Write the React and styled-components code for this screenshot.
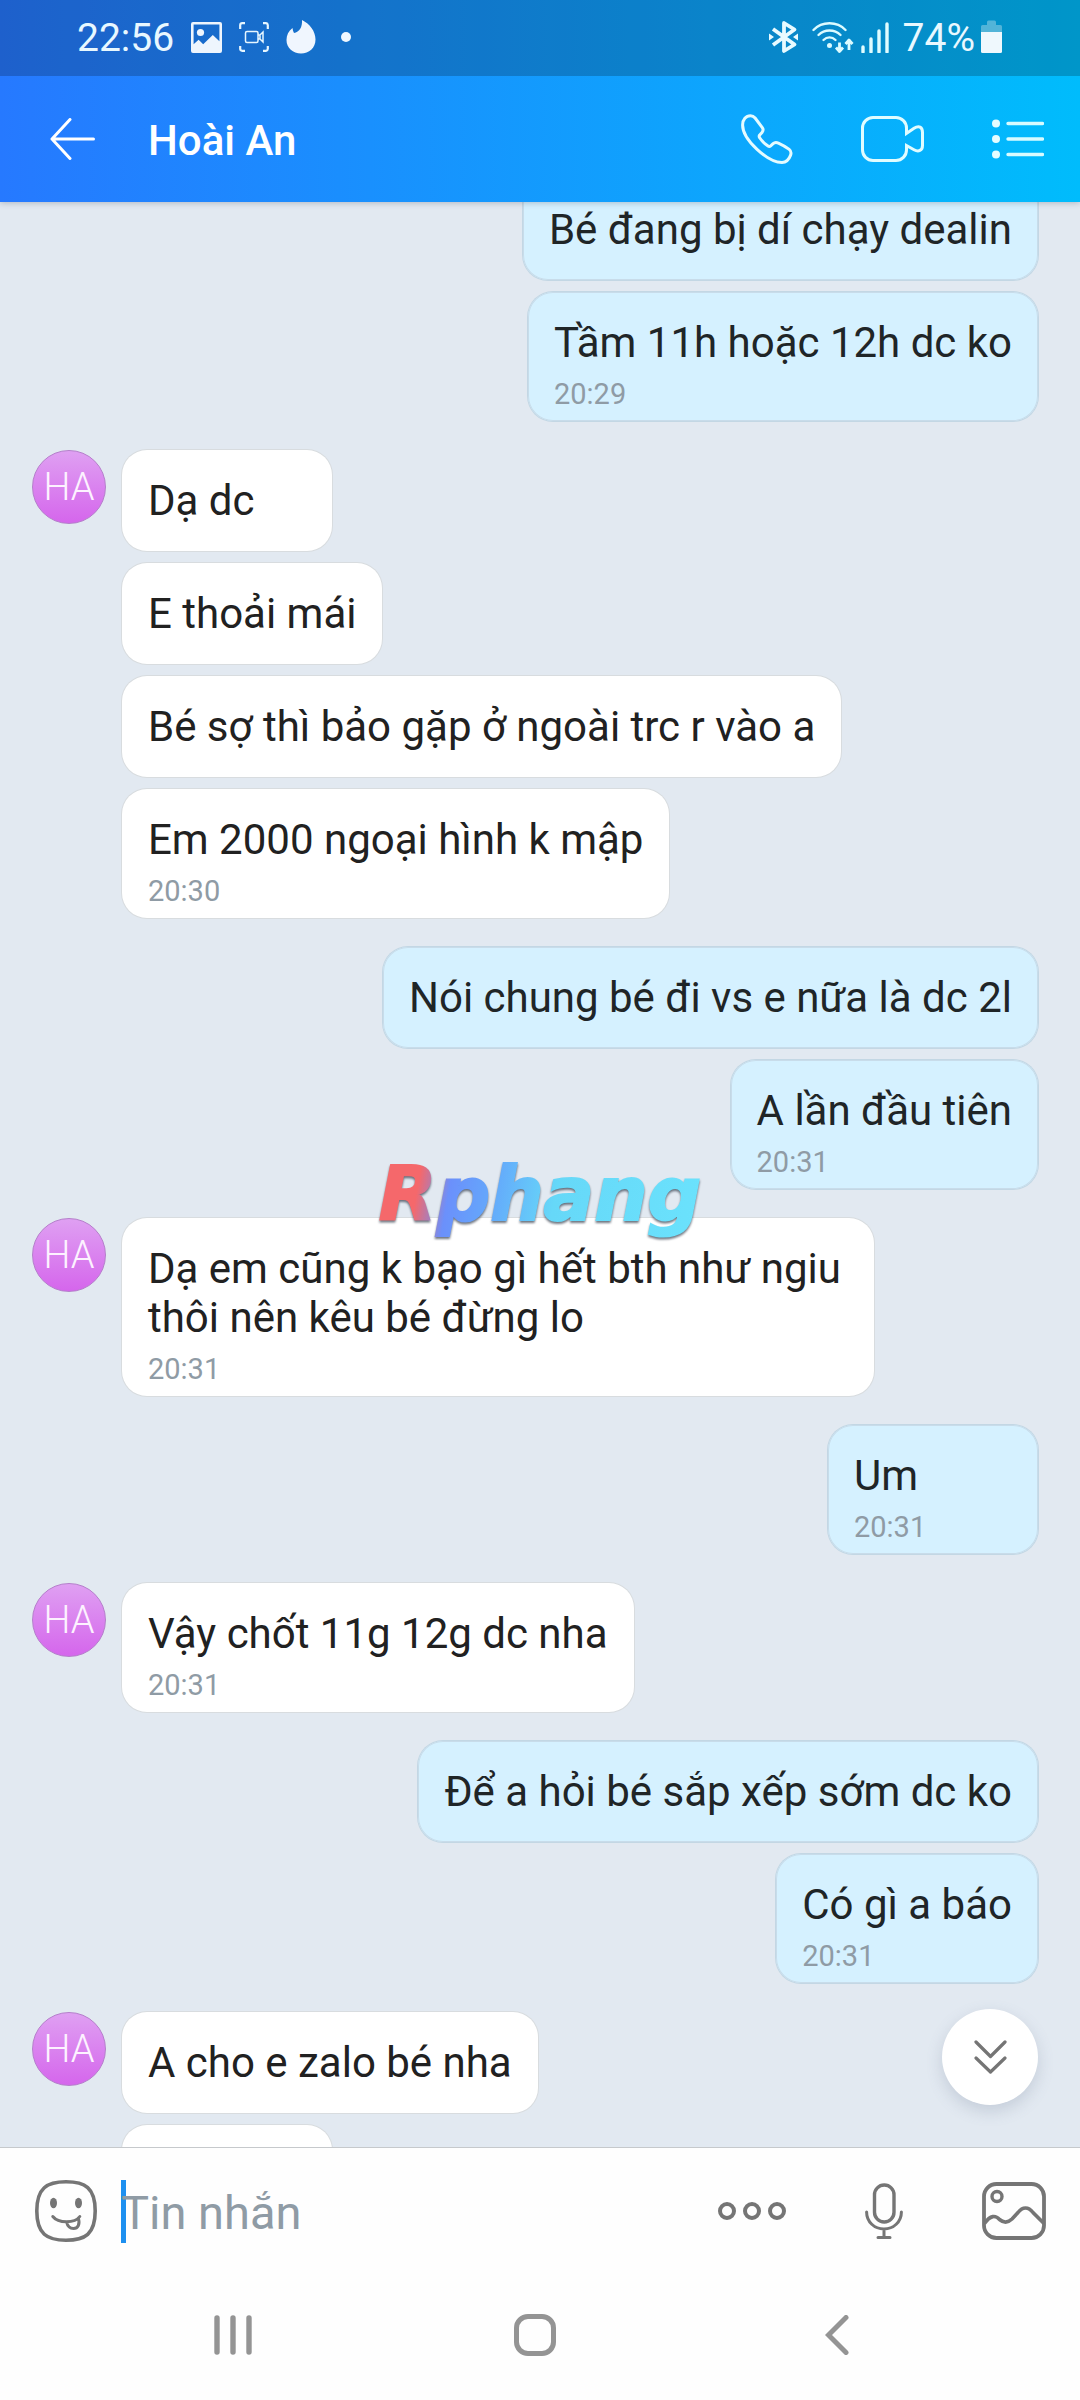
import React, { useLayoutEffect, useRef, useState } from "react";
import styled, { createGlobalStyle, css } from "styled-components";

//conversation data, grouped by sender
const groups = [
  {
    mine: true,
    messages: [
      { text: "Bé đang bị dí chạy dealin" },
      { text: "Tầm 11h hoặc 12h dc ko", time: "20:29" },
    ],
  },
  {
    messages: [
      { text: "Dạ dc" },
      { text: "E thoải mái" },
      { text: "Bé sợ thì bảo gặp ở ngoài trc r vào a" },
      { text: "Em 2000 ngoại hình k mập", time: "20:30" },
    ],
  },
  {
    mine: true,
    messages: [
      { text: "Nói chung bé đi vs e nữa là dc 2l" },
      { text: "A lần đầu tiên", time: "20:31" },
    ],
  },
  {
    messages: [
      {
        text: "Dạ em cũng k bạo gì hết bth như ngiu thôi nên kêu bé đừng lo",
        time: "20:31",
      },
    ],
  },
  { mine: true, messages: [{ text: "Um", time: "20:31" }] },
  { messages: [{ text: "Vậy chốt 11g 12g dc nha", time: "20:31" }] },
  {
    mine: true,
    messages: [
      { text: "Để a hỏi bé sắp xếp sớm dc ko" },
      { text: "Có gì a báo", time: "20:31" },
    ],
  },
  { messages: [{ text: "A cho e zalo bé nha" }, { text: "" }] },
];

const StatusIcons = () => (
  <>
    <svg width="31" height="31" viewBox="0 0 31 31">
      <path
        fill="#eef5fd"
        fillRule="evenodd"
        d="M2 0h27a2 2 0 0 1 2 2v27a2 2 0 0 1-2 2H2a2 2 0 0 1-2-2V2a2 2 0 0 1 2-2zm.6 2.6v19.6l5-4.4 4.6 4.4 9.600-9.200 6.600 6.200V2.600z"
      />
      <circle cx="9.500" cy="10.500" r="3.600" fill="#eef5fd" />
    </svg>
    <svg width="30" height="30" viewBox="0 0 30 30" fill="none" stroke="#e6f6ff">
      <path
        strokeWidth="2.200"
        d="M1.200 7V3a2 2 0 0 1 2-1.800H6M24 1.200h3a2 2 0 0 1 1.800 1.800v4M28.800 24v3a2 2 0 0 1-1.800 1.800h-3M6 28.800H3.200A2 2 0 0 1 1.200 27v-3"
      />
      <path
        strokeWidth="1.500"
        d="M8 9.500h9.500a1.500 1.500 0 0 1 1.500 1.500v8a1.500 1.500 0 0 1-1.500 1.500H8A1.500 1.500 0 0 1 6.500 19v-8A1.500 1.500 0 0 1 8 9.500zM19 13l2 0 3-3v10l-3-3h-2M21 13v4"
      />
    </svg>
    <svg width="30" height="34" viewBox="0 0 30 34">
      <path
        fill="#f0f6fe"
        d="M16 0c8 4 13.500 11.500 13.500 19.500C29.500 28 23 33.500 15 33.500S.5 28 .5 20c0-5 2-9 6-12 .2 2 .7 3.700 1.500 5C13.500 12 16.500 7 16 0z"
      />
    </svg>
  </>
);

const SignalIcons = () => (
  <>
    <svg width="36" height="34" viewBox="0 0 36 34">
      <path
        d="M4 9l21.500 15.500-10.500 6.500V3l10.500 6.500L4 25"
        fill="none"
        stroke="#e8faff"
        strokeWidth="3.800"
        strokeLinejoin="round"
      />
      <path d="M0 13.500l5 3.500-5 3.500zM29 13.500v7L24 17z" fill="#e8faff" />
    </svg>
    <svg width="42" height="33" viewBox="0 0 42 33" fill="none" stroke="#dcfbff">
      <g strokeWidth="2.400" strokeLinecap="round">
        <path d="M1.500 9C10 0 25 0 33.500 9" />
        <path d="M6.500 14c6-6 16-6 22 0" />
        <path d="M11.500 19c3.500-3.500 8.500-3.500 12 0" />
      </g>
      <circle cx="17.500" cy="24.500" r="2.500" fill="#dcfbff" stroke="none" />
      <path
        strokeWidth="2.800"
        strokeLinejoin="round"
        d="M27.500 21.500V30M24 26.500l3.500 4 3.500-4M37 29V20M33.500 23l3.500-4 3.500 4"
      />
    </svg>
    <svg width="28" height="31" viewBox="0 0 28 31">
      <path
        d="M2 30v-5M10 30V17M18 30V9M26 30V2"
        stroke="#e0fcff"
        strokeWidth="3.400"
        strokeLinecap="round"
      />
    </svg>
  </>
);

const BatteryIcon = () => (
  <svg width="21" height="34" viewBox="0 0 21 34">
    <path
      fill="#52b4d8"
      d="M6 5V2a1.500 1.500 0 0 1 1.500-1.500h6A1.500 1.500 0 0 1 15 2v3h4.500A1.500 1.500 0 0 1 21 6.500V13H0V6.500A1.500 1.500 0 0 1 1.500 5z"
    />
    <path
      fill="#eff8fd"
      d="M0 12h21v19.500a1.500 1.500 0 0 1-1.500 1.500h-18A1.500 1.500 0 0 1 0 31.500z"
    />
  </svg>
);

const BackIcon = () => (
  <svg width="45" height="42" viewBox="0 0 45 42">
    <path
      d="M20 1.500L2 21l18 19.500M2 21h41.500"
      fill="none"
      stroke="#fff"
      strokeWidth="3"
      strokeLinecap="round"
      strokeLinejoin="round"
    />
  </svg>
);

const PhoneIcon = () => (
  <svg width="52" height="50" viewBox="0 0 52 50">
    <path
      d="M1.600 11C1.600 5.500 5 1.700 9.500 1.700c2 0 3.400.8 4.600 2.300l7.200 9.600c1.200 1.700 1 3.300-.3 4.800l-2.300 2.600c-.8 1-.7 1.800 0 2.800 2.200 3.400 4.900 6 8.300 8.300.9.600 1.800.6 2.700-.2l2.400-2.200c1.500-1.400 3.300-1.500 5.300-.6 4 1.800 7.600 3.800 10.800 6.300 2 1.600 2.300 3.400 1.300 6C48 45.500 45 48.400 41 48.400 27 48.400 1.600 26 1.600 11z"
      fill="none"
      stroke="#e4fbff"
      strokeWidth="3"
      strokeLinejoin="round"
    />
  </svg>
);

const VideoIcon = () => (
  <svg width="63" height="46" viewBox="0 0 63 46">
    <path
      d="M45.500 17.500V12A10.500 10.500 0 0 0 35 1.500H12A10.500 10.500 0 0 0 1.500 12v22A10.500 10.500 0 0 0 12 44.500h23A10.500 10.500 0 0 0 45.500 34v-4.500l7.500 4.200c4.500 2.600 8.500.8 8.500-4.200v-13c0-5.500-3.500-7.500-8.500-4.200z"
      fill="none"
      stroke="#e0fcff"
      strokeWidth="3"
    />
  </svg>
);

const ListIcon = () => (
  <svg width="52" height="40" viewBox="0 0 52 40">
    <path
      d="M16 4.500h34.500M16 20h34.500M16 35.500h34.500"
      stroke="#d8fbff"
      strokeWidth="3.400"
      strokeLinecap="round"
    />
    <circle cx="4" cy="4.500" r="4" fill="#e6fdff" />
    <circle cx="4" cy="20" r="4" fill="#e6fdff" />
    <circle cx="4" cy="35.500" r="4" fill="#e6fdff" />
  </svg>
);

const StickerIcon = () => (
  <svg width="62" height="62" viewBox="0 0 62 62" fill="none" stroke="#757575">
    <path
      d="M31 1.800c19 0 29.200 6 29.200 29.200S50 60.200 31 60.200 1.800 54 1.800 31 12 1.800 31 1.800z"
      strokeWidth="3.600"
    />
    <ellipse cx="18.500" cy="23" rx="3.500" ry="5.200" fill="#757575" stroke="none" />
    <ellipse cx="43.500" cy="23" rx="3.500" ry="5.200" fill="#757575" stroke="none" />
    <path
      d="M17.800 36.500c5.500 7 22 7 27 0M31.500 42c1 4 3.500 6.500 7 6.500 4.500 0 6.500-4 5-10"
      strokeWidth="3"
      strokeLinecap="round"
    />
  </svg>
);

const MoreIcon = () => (
  <svg width="68" height="18" viewBox="0 0 68 18" fill="none" stroke="#757575">
    <circle cx="9" cy="9" r="7" strokeWidth="4" />
    <circle cx="34" cy="9" r="7" strokeWidth="4" />
    <circle cx="59" cy="9" r="7" strokeWidth="4" />
  </svg>
);

const MicIcon = () => (
  <svg width="38" height="57" viewBox="0 0 38 57" fill="none" stroke="#757575">
    <rect x="9.500" y="2" width="19.500" height="37" rx="9.700" strokeWidth="3.400" />
    <path
      d="M1.600 29c0 10 8 17 17.400 17s17.400-7 17.400-17M19 46v8M13 54.500h12"
      strokeWidth="3"
      strokeLinecap="round"
    />
  </svg>
);

const GalleryIcon = () => (
  <svg width="64" height="58" viewBox="0 0 64 58" fill="none" stroke="#757575">
    <rect x="2" y="2" width="60" height="54" rx="12.500" strokeWidth="3.800" />
    <circle cx="15" cy="14.500" r="5" strokeWidth="3.400" />
    <path
      d="M2.500 41.500c6-8.500 11-8.500 15-4 4 3.300 8.500 3.300 12.500-.5l6-6.500c4.500-6 10.500-6 15 0l11 11"
      strokeWidth="3.600"
    />
  </svg>
);

const DoubleDownIcon = () => (
  <svg width="33" height="34" viewBox="0 0 33 34">
    <path
      d="M2 2l14.500 14.500L31 2M2 18l14.500 14L31 18"
      fill="none"
      stroke="#757575"
      strokeWidth="3.200"
      strokeLinecap="round"
      strokeLinejoin="round"
    />
  </svg>
);

const App = () => {
  const chatRef = useRef(null);
  const [draft, setDraft] = useState("");

  //keep the list a little scrolled under the header
  useLayoutEffect(() => {
    chatRef.current.scrollTop = 23;
  }, []);

  const scrollDown = () => {
    chatRef.current.scrollTop = chatRef.current.scrollHeight;
  };

  return (
    <>
      <GlobalStyle />
      <Screen>
        <TopBar>
          <StatusBar>
            <StatusText>22:56</StatusText>
            <StatusLeft>
              <StatusIcons />
              <StatusDot />
            </StatusLeft>
            <StatusRight>
              <SignalIcons />
            </StatusRight>
            <StatusText>74%</StatusText>
            <BatteryIcon />
          </StatusBar>
          <Header>
            <IconButton aria-label="Back">
              <BackIcon />
            </IconButton>
            <Title>Hoài An</Title>
            <HeaderActions>
              <IconButton aria-label="Call">
                <PhoneIcon />
              </IconButton>
              <IconButton aria-label="Video call">
                <VideoIcon />
              </IconButton>
              <IconButton aria-label="Options">
                <ListIcon />
              </IconButton>
            </HeaderActions>
          </Header>
        </TopBar>

        <ChatArea>
          <Chat ref={chatRef}>
            {groups.map((group, index) => (
              <Group key={index} $mine={group.mine}>
                {!group.mine && <Avatar>HA</Avatar>}
                <Bubbles $mine={group.mine}>
                  {group.messages.map((message, i) => (
                    <Bubble key={i} $mine={group.mine} $timed={message.time}>
                      <Message>{message.text}</Message>
                      {message.time && <Time>{message.time}</Time>}
                    </Bubble>
                  ))}
                </Bubbles>
              </Group>
            ))}
          </Chat>
          <ScrollButton aria-label="Scroll to latest" onClick={scrollDown}>
            <DoubleDownIcon />
          </ScrollButton>
        </ChatArea>

        <Composer>
          <IconButton aria-label="Stickers">
            <StickerIcon />
          </IconButton>
          <Field>
            <Input
              type="text"
              aria-label="Tin nhắn"
              placeholder="Tin nhắn"
              value={draft}
              onChange={(e) => setDraft(e.target.value)}
            />
          </Field>
          <ComposerActions>
            <IconButton aria-label="More">
              <MoreIcon />
            </IconButton>
            <IconButton aria-label="Voice">
              <MicIcon />
            </IconButton>
            <IconButton aria-label="Gallery">
              <GalleryIcon />
            </IconButton>
          </ComposerActions>
        </Composer>

        <NavBar>
          <IconButton aria-label="Recent apps">
            <svg width="38" height="40" viewBox="0 0 38 40">
              <path
                d="M3 3v34M19 3v34M35 3v34"
                stroke="#949494"
                strokeWidth="5.400"
                strokeLinecap="round"
              />
            </svg>
          </IconButton>
          <IconButton aria-label="Home">
            <svg width="42" height="42" viewBox="0 0 42 42">
              <rect
                x="2.500"
                y="2.500"
                width="37"
                height="37"
                rx="11.500"
                fill="none"
                stroke="#949494"
                strokeWidth="5"
              />
            </svg>
          </IconButton>
          <IconButton aria-label="Navigate back">
            <svg width="24" height="40" viewBox="0 0 24 40">
              <path
                d="M21 2.500L3.500 20 21 37.500"
                fill="none"
                stroke="#949494"
                strokeWidth="5"
                strokeLinecap="round"
              />
            </svg>
          </IconButton>
        </NavBar>

        <Watermark>Rphang</Watermark>
      </Screen>
    </>
  );
};

export default App;

//style Component
const GlobalStyle = createGlobalStyle`
  * {
    box-sizing: border-box;
  }
  body {
    margin: 0;
    font-family: Roboto, "Noto Sans", sans-serif;
  }
  svg {
    display: block;
    flex-shrink: 0;
  }
`;

const Screen = styled.div`
  position: relative;
  display: flex;
  flex-direction: column;
  height: 100vh;
  background: #fefefe;
`;

const TopBar = styled.header`
  position: relative;
  z-index: 1;
  background: linear-gradient(90deg, #2679ff, #00bcfc);
  box-shadow: 0 1px 6px rgba(60, 70, 90, 0.3);
`;

const StatusBar = styled.div`
  display: flex;
  align-items: center;
  height: 76px;
  padding: 0 78px 2px 77px;
  background: rgba(0, 0, 0, 0.2);
`;

const StatusText = styled.span`
  padding-top: 2px;
  font-size: 39px;
  line-height: 48px;
  color: #e8f8ff;
`;

const StatusLeft = styled.div`
  display: flex;
  align-items: center;
  flex: 1;
  gap: 17px;
  padding-left: 17px;
`;

const StatusDot = styled.span`
  width: 10px;
  height: 10px;
  margin-left: 8px;
  border-radius: 50%;
  background: #f0f8ff;
`;

const StatusRight = styled.div`
  display: flex;
  align-items: center;
  gap: 7px;
  padding-right: 14px;

  & + span {
    margin-right: 6px;
  }
`;

const Header = styled.div`
  display: flex;
  align-items: center;
  gap: 53px;
  height: 126px;
  padding: 0 36px 0 50px;
`;

const Title = styled.h1`
  flex: 1;
  margin: 0;
  padding-top: 2px;
  font-size: 42px;
  line-height: 49px;
  font-weight: 500;
  color: #fff;
`;

const HeaderActions = styled.div`
  display: flex;
  align-items: center;
  gap: 68px;
`;

const IconButton = styled.button`
  display: flex;
  align-items: center;
  justify-content: center;
  padding: 0;
  border: none;
  background: transparent;
`;

const ChatArea = styled.main`
  position: relative;
  flex: 1;
  min-height: 0;
  background: #e2e9f1;
`;

const Chat = styled.div`
  display: flex;
  flex-direction: column;
  gap: 29px;
  height: 100%;
  padding: 0 42px 0 32px;
  overflow-y: auto;
  scrollbar-width: none;
`;

const Group = styled.section`
  display: flex;
  flex-shrink: 0;
  align-items: flex-start;
  gap: 16px;
  justify-content: ${({ $mine }) => ($mine ? "flex-end" : "flex-start")};
`;

const Avatar = styled.div`
  display: flex;
  align-items: center;
  justify-content: center;
  width: 74px;
  height: 74px;
  border: 1px solid #b57fcb;
  border-radius: 50%;
  background: linear-gradient(#dfa0f2, #d566ec);
  color: #fdf2ff;
  font-size: 38px;
  font-weight: 300;
`;

const Bubbles = styled.div`
  display: flex;
  flex-direction: column;
  gap: 12px;
  max-width: 752px;
  align-items: ${({ $mine }) => ($mine ? "flex-end" : "flex-start")};
`;

const Bubble = styled.div`
  min-width: 210px;
  min-height: 101px;
  padding: 26px;
  border-radius: 25px;
  color: #212121;
  background: #fff;
  box-shadow: 0 0 0 1px #d8dcdf;

  ${({ $timed }) =>
    $timed &&
    css`
      padding-bottom: 10px;
    `}

  ${({ $mine }) =>
    $mine &&
    css`
      color: #1f2527;
      background: #d5f1ff;
      box-shadow: inset 0 0 0 1px #c8dcea, 0 0 0 1px #c3d7e4;
    `}
`;

const Message = styled.p`
  margin: 0;
  font-size: 42px;
  line-height: 49px;
`;

const Time = styled.time`
  display: block;
  margin-top: 10px;
  font-size: 29px;
  line-height: 34px;
  color: #8f9ba5;
`;

const ScrollButton = styled.button`
  position: absolute;
  right: 42px;
  bottom: 42px;
  display: flex;
  align-items: center;
  justify-content: center;
  width: 96px;
  height: 96px;
  padding: 0;
  border: none;
  border-radius: 50%;
  background: #fff;
  box-shadow: 0 6px 16px rgba(90, 105, 130, 0.22);
`;

const Composer = styled.div`
  display: flex;
  align-items: center;
  gap: 24px;
  height: 127px;
  padding: 0 34px 0 35px;
  border-top: 1px solid #c6c9cc;
`;

const Field = styled.div`
  position: relative;
  flex: 1;
  min-width: 0;

  &::before {
    content: "";
    position: absolute;
    top: 0;
    left: 0;
    width: 5px;
    height: 63px;
    background: #1e90f0;
  }
`;

const Input = styled.input`
  position: relative;
  display: block;
  width: 100%;
  height: 63px;
  padding: 2px 0 0;
  border: none;
  outline: none;
  background: transparent;
  font-family: inherit;
  font-size: 47px;
  color: #212121;

  &::placeholder {
    color: #8f9ba5;
    opacity: 1;
  }
`;

const ComposerActions = styled.div`
  display: flex;
  align-items: center;
  gap: 79px;
`;

const NavBar = styled.nav`
  display: grid;
  grid-template-columns: repeat(3, 1fr);
  align-items: center;
  justify-items: center;
  height: 126px;
  padding: 0 92px 4px 82px;
`;

const Watermark = styled.div`
  position: absolute;
  z-index: 2;
  top: 50%;
  left: 50%;
  transform: translate(-50%, -50%);
  padding: 0 8px 12px;
  font-family: "DejaVu Sans", sans-serif;
  font-size: 75px;
  line-height: 92px;
  font-weight: 700;
  font-style: italic;
  color: transparent;
  -webkit-text-stroke: 2px transparent;
  background: linear-gradient(
    100deg,
    #f5686b 15%,
    #6b90fb 24%,
    #64a8fb 36%,
    #66d8f8 54%,
    #6be3fd
  );
  background-clip: text;
  filter: drop-shadow(0 2px 1px rgba(50, 60, 75, 0.7));
  pointer-events: none;
`;
